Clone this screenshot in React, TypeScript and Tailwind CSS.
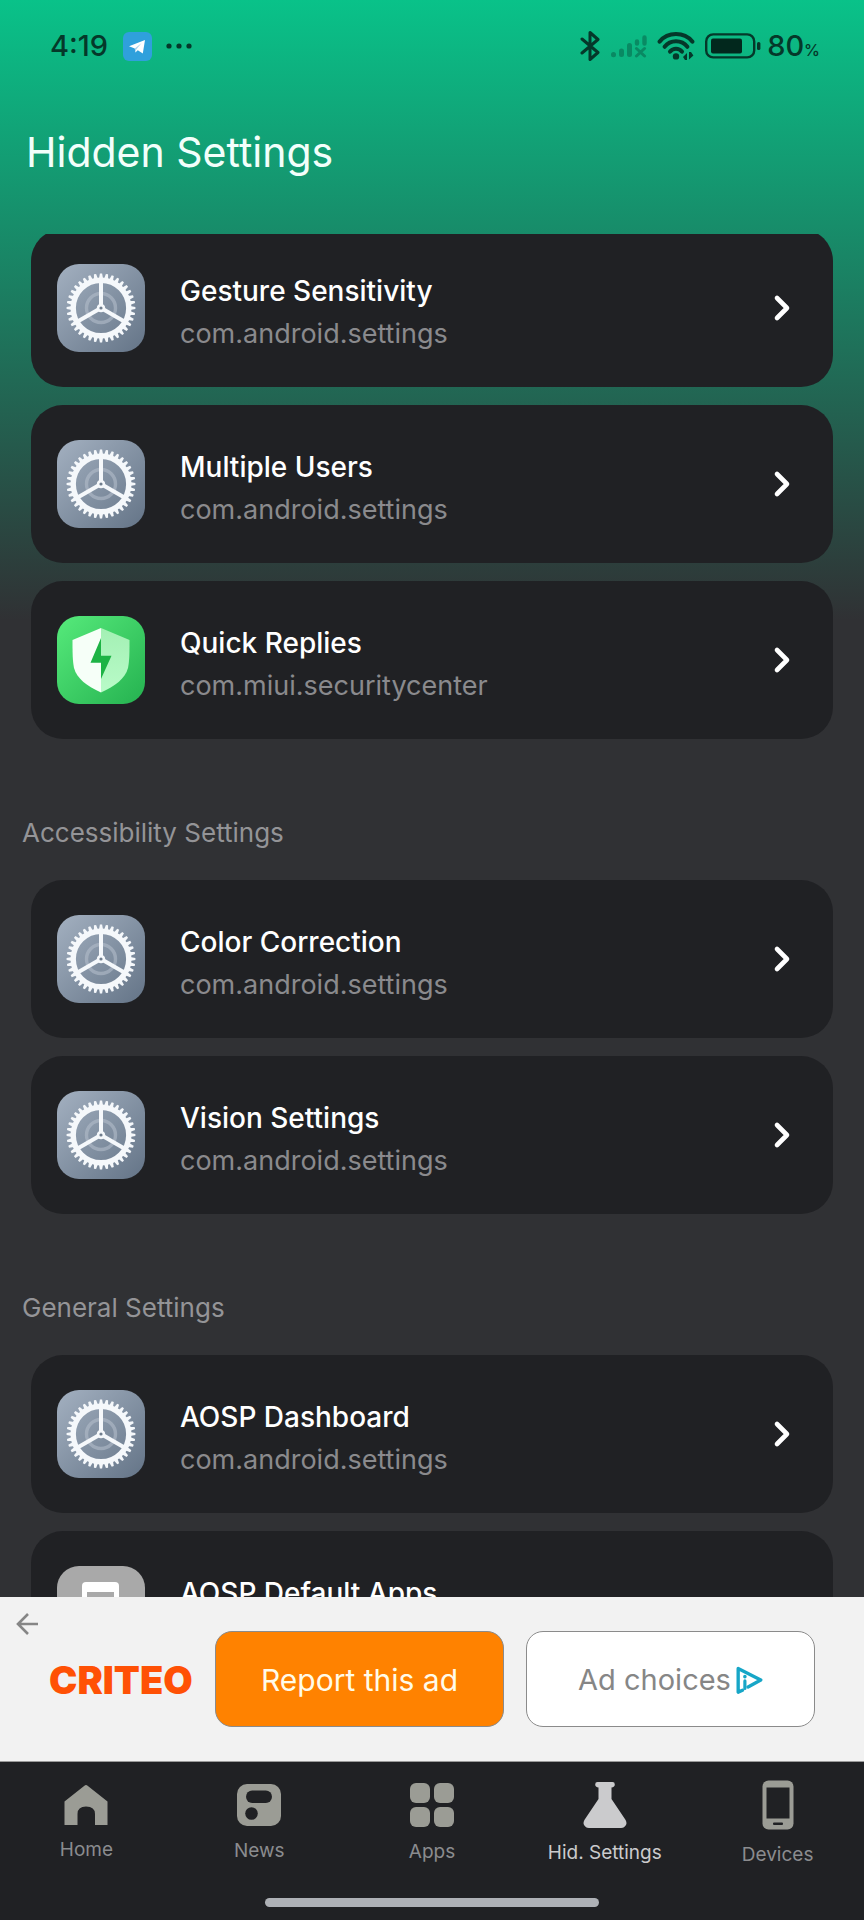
import type { ReactNode } from "react";

type IconKind = "gear" | "shield" | "apps";

interface SettingItem {
  title: string;
  pkg: string;
  icon: IconKind;
}

const recentItems: SettingItem[] = [
  { title: "Gesture Sensitivity", pkg: "com.android.settings", icon: "gear" },
  { title: "Multiple Users", pkg: "com.android.settings", icon: "gear" },
  { title: "Quick Replies", pkg: "com.miui.securitycenter", icon: "shield" },
];

const sections: { heading: string; items: SettingItem[] }[] = [
  {
    heading: "Accessibility Settings",
    items: [
      { title: "Color Correction", pkg: "com.android.settings", icon: "gear" },
      { title: "Vision Settings", pkg: "com.android.settings", icon: "gear" },
    ],
  },
  {
    heading: "General Settings",
    items: [
      { title: "AOSP Dashboard", pkg: "com.android.settings", icon: "gear" },
      { title: "AOSP Default Apps", pkg: "com.android.settings", icon: "apps" },
    ],
  },
];

const teeth = Array.from({ length: 36 }, (_, i) => i * 10);

function GearIcon() {
  return (
    <svg viewBox="0 0 88 88" className="h-22 w-22 shrink-0" aria-hidden="true">
      <defs>
        <linearGradient id="gearBg" x1="0" y1="0" x2="1" y2="1">
          <stop offset="0" stopColor="#a3b0c0" />
          <stop offset="1" stopColor="#647487" />
        </linearGradient>
      </defs>
      <rect width="88" height="88" rx="22" fill="url(#gearBg)" />
      <circle cx="44" cy="44" r="14.5" fill="none" stroke="#b3bdc9" strokeWidth="3.4" opacity="0.6" />
      <circle cx="44" cy="44" r="27.8" fill="none" stroke="#f5f8fb" strokeWidth="5.4" />
      {teeth.map((deg) => (
        <path key={deg} d="M41.9 15 L42.9 9.6 H45.1 L46.1 15 Z" fill="#f5f8fb" transform={`rotate(${deg} 44 44)`} />
      ))}
      {[0, 120, 240].map((deg) => (
        <path key={deg} d="M44 42 V17" stroke="#f5f8fb" strokeWidth="4" transform={`rotate(${deg} 44 44)`} />
      ))}
      <circle cx="44" cy="44" r="4.2" fill="#f5f8fb" />
      <circle cx="44" cy="44" r="1.6" fill="#6f7d8d" />
    </svg>
  );
}

function ShieldIcon() {
  return (
    <svg viewBox="0 0 88 88" className="h-22 w-22 shrink-0" aria-hidden="true">
      <defs>
        <linearGradient id="shieldBg" x1="0" y1="0" x2="1" y2="1">
          <stop offset="0" stopColor="#56ea7b" />
          <stop offset="1" stopColor="#25b250" />
        </linearGradient>
        <linearGradient id="shieldRight" x1="0" y1="0" x2="0" y2="1">
          <stop offset="0" stopColor="#a3f0b4" />
          <stop offset="1" stopColor="#b9fbc8" />
        </linearGradient>
      </defs>
      <rect width="88" height="88" rx="22" fill="url(#shieldBg)" />
      <path d="M44 12 L15.5 24 C15.5 36 15.5 44 17 52 C20 63 30 70 44 76.5 Z" fill="#f6fff8" />
      <path d="M44 12 L72.5 24 C72.5 36 72.5 44 71 52 C68 63 58 70 44 76.5 Z" fill="url(#shieldRight)" />
      <path d="M44 22 L33.5 46.7 H44 V63 L54.5 39.7 H44 Z" fill="#1db345" />
    </svg>
  );
}

function DefaultAppsIcon() {
  return (
    <svg viewBox="0 0 88 88" className="h-22 w-22 shrink-0" aria-hidden="true">
      <rect width="88" height="88" rx="22" fill="#a9a9a9" />
      <rect x="25" y="16" width="37" height="56" rx="4" fill="#fff" />
      <rect x="30" y="26" width="27" height="36" fill="#a9a9a9" />
    </svg>
  );
}

const itemIcons: Record<IconKind, ReactNode> = {
  gear: <GearIcon />,
  shield: <ShieldIcon />,
  apps: <DefaultAppsIcon />,
};

function SettingCard({ item }: { item: SettingItem }) {
  return (
    <li>
      <button className="flex h-[158px] w-full items-center rounded-[32px] bg-[#202124] pr-10 pl-[26px] text-left">
        {itemIcons[item.icon]}
        <span className="ml-[35px] flex-1 pt-[10px]">
          <span className="block text-[28px] leading-[42px] font-medium text-white">{item.title}</span>
          <span className="block text-[27px] leading-[44px] text-[#8a8a8d]">{item.pkg}</span>
        </span>
        <svg viewBox="0 0 20 28" className="h-7 w-5" fill="none" aria-hidden="true">
          <path d="M4 4 L14 14 L4 24" stroke="#fff" strokeWidth="4.6" strokeLinecap="round" strokeLinejoin="round" />
        </svg>
      </button>
    </li>
  );
}

function SettingList({ items }: { items: SettingItem[] }) {
  return (
    <ul className="mx-[31px] flex flex-col gap-[18px]">
      {items.map((item) => (
        <SettingCard key={item.title} item={item} />
      ))}
    </ul>
  );
}

function StatusBar() {
  return (
    <div className="flex h-[92px] shrink-0 items-center justify-between pr-11 pl-[50px] text-[#05382a]">
      <div className="flex items-center">
        <span className="text-[29px] font-medium">4:19</span>
        <svg viewBox="0 0 29 29" className="ml-[15px] h-[29px] w-[29px]" aria-hidden="true">
          <rect width="29" height="29" rx="6" fill="#2fa0dc" />
          <path d="M6 14.2 L22 8 L19.8 21.6 L14.8 18.2 L12.4 20.4 L11.8 16.4 Z" fill="#fff" />
          <path d="M11.8 16.4 L18.6 11 L13.4 17.2 L12.4 20.4 Z" fill="#a9d3ee" />
        </svg>
        <svg viewBox="0 0 26 6" className="ml-[14px] h-[6px] w-[26px]" fill="currentColor" aria-hidden="true">
          <circle cx="3" cy="3" r="2.6" />
          <circle cx="13" cy="3" r="2.6" />
          <circle cx="23" cy="3" r="2.6" />
        </svg>
      </div>
      <div className="flex items-center">
        <svg viewBox="0 0 20 32" className="h-8 w-5" fill="none" stroke="currentColor" strokeWidth="3" strokeLinecap="round" strokeLinejoin="round" aria-hidden="true">
          <path d="M2 9 L18 22.5 L10 29.5 V2.5 L18 9.5 L2 23" />
        </svg>
        <svg viewBox="0 0 38 24" className="ml-[10px] h-6 w-[38px] opacity-35" fill="none" stroke="currentColor" strokeWidth="5" strokeLinecap="round" aria-hidden="true">
          <path d="M3.5 20.6 V20.8 M11.5 17 V20.6 M19.5 11.5 V20.6" />
          <path d="M27 7.5 V9.5 M34.5 3.5 V9.5" strokeWidth="4.4" />
          <path d="M26.5 14.5 L34.5 22 M34.5 14.5 L26.5 22" strokeWidth="3" />
        </svg>
        <svg viewBox="0 0 38 28" className="ml-[9px] h-7 w-[38px]" fill="none" stroke="currentColor" strokeWidth="4" strokeLinecap="round" aria-hidden="true">
          <path d="M2.6 9.6 C11 -0.4 27 -0.4 35.4 9.6" />
          <path d="M7.6 14.8 C13.4 7.4 24.6 7.4 30.4 14.8" />
          <path d="M13 19.6 C16.2 15.8 21.8 15.8 25 19.6" />
          <circle cx="19" cy="24.4" r="3.2" fill="currentColor" stroke="none" />
          <path d="M26 25 L30 21 V28 H28 Z M32 20 V27.5 L36.4 23.4 L34 20 Z" fill="currentColor" stroke="none" />
        </svg>
        <svg viewBox="0 0 56 26" className="ml-[10px] h-[26px] w-14" aria-hidden="true">
          <rect x="1.2" y="1.4" width="48" height="23" rx="7" fill="none" stroke="currentColor" strokeWidth="2.4" />
          <rect x="6" y="5.5" width="31" height="15" rx="2" fill="#02281d" />
          <rect x="52" y="9" width="3.4" height="8" rx="1.6" fill="currentColor" />
        </svg>
        <span className="ml-[6px] flex items-baseline">
          <span className="text-[29px] font-medium">80</span>
          <span className="text-[16px] font-medium">%</span>
        </span>
      </div>
    </div>
  );
}

function AdBanner() {
  return (
    <aside className="flex h-[165px] shrink-0 border-b border-[#9a9a9a] bg-[#f2f2f2] pr-[49px]">
      <button aria-label="Close ad" className="mt-[15px] ml-[15px] flex h-6 w-6 justify-center">
        <svg viewBox="0 0 24 24" className="h-6 w-6" fill="none" stroke="#868686" strokeWidth="2.6" aria-hidden="true">
          <path d="M23 12 H3 M13 2 L3 12 L13 22" />
        </svg>
      </button>
      <div className="ml-[10px] flex flex-1 items-center">
        <span className="w-[166px] pt-[2px] text-[38px] font-black text-[#ff5105]">CRITEO</span>
        <div className="flex flex-1 gap-[22px]">
          <button className="h-24 flex-1 rounded-[17px] border border-[#8b8b8b] bg-[#ff8200] pt-[2px] text-[30px] text-[#fffbe9]">
            Report this ad
          </button>
          <button className="flex h-24 flex-1 items-center justify-center gap-1 rounded-[17px] border border-[#8b8b8b] bg-white pt-[2px] text-[29px] text-[#868686]">
            Ad choices
            <svg viewBox="0 0 30 30" className="h-7 w-7" fill="none" stroke="#17a6c7" strokeLinecap="round" strokeLinejoin="round" aria-hidden="true">
              <path d="M8 26 L3.4 28 V2.6 L27.6 15 L14 22.4" strokeWidth="3.6" />
              <path d="M10.6 16 V24" strokeWidth="3.4" />
              <circle cx="10.6" cy="11.4" r="1.9" fill="#17a6c7" stroke="none" />
            </svg>
          </button>
        </div>
      </div>
    </aside>
  );
}

const navItems = [
  {
    label: "Home",
    icon: (
      <svg viewBox="0 0 44 40" className="h-10 w-11" fill="currentColor" aria-hidden="true">
        <path d="M20.4 0.7 Q22 -0.5 23.6 0.7 L43.5 16.5 V40 H31 V29 Q31 21.5 22 21.5 Q13.5 21.5 13.5 29 V40 H0.5 V16.5 Z" />
      </svg>
    ),
  },
  {
    label: "News",
    icon: (
      <svg viewBox="0 0 44 42" className="h-[42px] w-11" aria-hidden="true">
        <rect width="44" height="42" rx="10" fill="currentColor" />
        <rect x="9" y="6.5" width="26" height="12.5" rx="6.2" fill="#202124" />
        <circle cx="14.5" cy="29.5" r="6.3" fill="#202124" />
      </svg>
    ),
  },
  {
    label: "Apps",
    icon: (
      <svg viewBox="0 0 44 44" className="h-11 w-11" fill="currentColor" aria-hidden="true">
        <rect width="20" height="20" rx="6" />
        <rect x="24" width="20" height="20" rx="6" />
        <rect y="24" width="20" height="20" rx="6" />
        <rect x="24" y="24" width="20" height="20" rx="6" />
      </svg>
    ),
  },
  {
    label: "Hid. Settings",
    active: true,
    icon: (
      <svg viewBox="0 0 44 46" className="h-[46px] w-11" fill="currentColor" aria-hidden="true">
        <path d="M14.5 0 H29.5 Q31.8 0 31.8 2.4 Q31.8 5 28.5 5.4 V17 L42.6 38 Q45 42.5 41 45.3 Q40 46 38 46 H6 Q4 46 3 45.3 Q-1 42.5 1.4 38 L15.5 17 V5.4 Q12.2 5 12.2 2.4 Q12.2 0 14.5 0 Z" />
      </svg>
    ),
  },
  {
    label: "Devices",
    icon: (
      <svg viewBox="0 0 32 50" className="h-[50px] w-8" aria-hidden="true">
        <rect x="0.5" y="0.5" width="31" height="49" rx="6" fill="currentColor" />
        <rect x="4.5" y="7.5" width="23" height="31" fill="#202124" />
        <rect x="11" y="42.5" width="10" height="2.6" rx="1" fill="#202124" />
      </svg>
    ),
  },
];

function BottomNav() {
  return (
    <nav className="shrink-0 bg-[#202124] pb-[13px]">
      <div className="flex h-[123px] items-center">
        {navItems.map((item) => (
          <a
            key={item.label}
            href="#"
            className={`flex flex-1 flex-col items-center gap-[13px] ${item.active ? "text-[#cbcbcd]" : "text-[#9b9c95]"}`}
          >
            {item.icon}
            <span className={`text-[19px] leading-6 ${item.active ? "text-[#cbcbcd]" : "text-[#8b8c8f]"}`}>
              {item.label}
            </span>
          </a>
        ))}
      </div>
      <div className="mx-auto mt-[13px] h-[9px] w-[334px] rounded-full bg-[#aeb1b6]" />
    </nav>
  );
}

export default function App() {
  return (
    <div className="flex h-screen flex-col overflow-hidden bg-[#303134] bg-[linear-gradient(to_bottom,#09c289_0px,#303134_620px)] font-['Inter',sans-serif]">
      <StatusBar />
      <header className="flex h-[142px] shrink-0 items-start px-[26px] pt-8">
        <h1 className="text-[41px] leading-[56px] text-[#f2fffb]">Hidden Settings</h1>
      </header>

      <main className="min-h-0 flex-1 overflow-hidden">
        <div className="-mt-[5px]">
          <SettingList items={recentItems} />
          {sections.map((section) => (
            <section key={section.heading}>
              <h2 className="px-[22px] pt-[73px] pb-[26px] text-[26px] leading-[42px] text-[#949497]">
                {section.heading}
              </h2>
              <SettingList items={section.items} />
            </section>
          ))}
        </div>
      </main>

      <AdBanner />
      <BottomNav />
    </div>
  );
}
